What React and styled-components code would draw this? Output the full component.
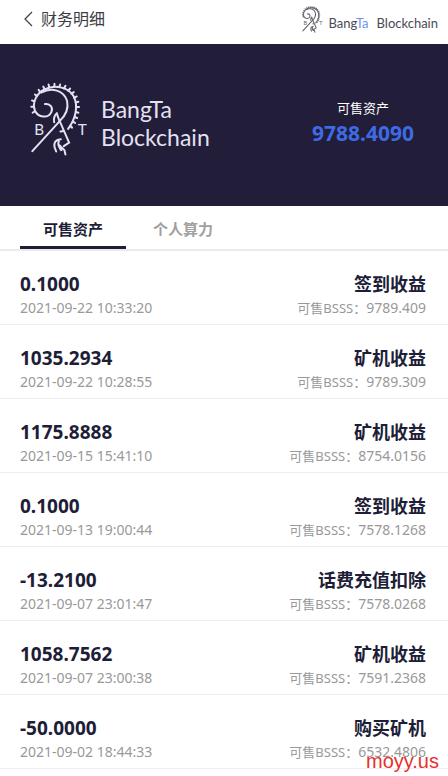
import React from 'react';
import styled, {createGlobalStyle} from "styled-components";

const GlobalStyle = createGlobalStyle`
  * {
    box-sizing: border-box;
  }
  body {
    margin: 0;
    background: #fff;
    color: #201d37;
    font-family: "Noto Sans", "Noto Sans CJK SC", sans-serif;
  }
  button {
    margin: 0;
    padding: 0;
    border: none;
    background: none;
    font-family: inherit;
    cursor: pointer;
  }
`

const Page = styled.div`
  position: relative;
  min-height: 100vh;
`

const TopBar = styled.header`
  display: flex;
  align-items: center;
  justify-content: space-between;
  height: 44px;
  padding: 0 10px 6px 22px;
`

const BackButton = styled.button`
  display: flex;
  align-items: center;
  gap: 7px;
  font-size: 16px;
  line-height: 24px;
  color: #3c3c44;
`

const Brand = styled.div`
  display: flex;
  align-items: center;
  gap: ${props => props.$large ? '13px' : '5px'};
`

const BrandName = styled.div`
  display: flex;
  flex-direction: ${props => props.$large ? 'column' : 'row'};
  gap: ${props => props.$large ? '0' : '8px'};
  padding-top: 8px;
  font-family: Lato, sans-serif;
  font-size: ${props => props.$large ? '23px' : '13px'};
  line-height: ${props => props.$large ? '28px' : '18px'};
  color: ${props => props.$large ? '#e4e1f2' : '#4a4958'};
`

const Accent = styled.span`
  color: #6b93ea;
`

const Banner = styled.section`
  display: flex;
  align-items: center;
  justify-content: space-between;
  height: 162px;
  padding: 0 34px 12px 30px;
  background: #221d38;
`

const Balance = styled.div`
  display: flex;
  flex-direction: column;
  align-items: center;
  padding-top: 6px;
`

const BalanceLabel = styled.span`
  font-size: 13px;
  line-height: 22px;
  color: #fff;
`

const BalanceValue = styled.strong`
  font-size: 21px;
  line-height: 28px;
  color: #3e6ae6;
`

const Tabs = styled.nav`
  display: flex;
  gap: 4px;
  height: 45px;
  padding: 0 20px;
  border-bottom: 2px solid #ebebeb;
`

const Tab = styled.button`
  && {
    padding: 4px 23px 0;
    border-bottom: 3px solid ${props => props.$active ? '#201d37' : 'transparent'};
  }
  font-size: 15px;
  font-weight: 700;
  color: ${props => props.$active ? '#201d37' : '#a0a0a0'};
`

const List = styled.ul`
  margin: 0;
  padding: 0;
  list-style: none;
`

const Row = styled.li`
  display: flex;
  justify-content: space-between;
  padding: 20px 22px 5px 20px;
  border-bottom: 1px solid #ededed;
`

const Column = styled.div`
  display: flex;
  flex-direction: column;
  align-items: ${props => props.$right ? 'flex-end' : 'flex-start'};
`

const Title = styled.span`
  font-size: ${props => props.$cjk ? '18px' : '19px'};
  font-weight: 700;
  line-height: 26px;
`

const Detail = styled.span`
  font-size: 14px;
  line-height: 22px;
  color: #999;
`

const DetailLabel = styled.span`
  font-size: 13px;
`

const Watermark = styled.div`
  position: absolute;
  right: 9px;
  bottom: 4px;
  font-family: "Liberation Sans", sans-serif;
  font-size: 20px;
  line-height: 22px;
  color: #e8302c;
`

const records = [
    {amount: '0.1000', time: '2021-09-22 10:33:20', title: '签到收益', rest: '9789.409'},
    {amount: '1035.2934', time: '2021-09-22 10:28:55', title: '矿机收益', rest: '9789.309'},
    {amount: '1175.8888', time: '2021-09-15 15:41:10', title: '矿机收益', rest: '8754.0156'},
    {amount: '0.1000', time: '2021-09-13 19:00:44', title: '签到收益', rest: '7578.1268'},
    {amount: '-13.2100', time: '2021-09-07 23:01:47', title: '话费充值扣除', rest: '7578.0268'},
    {amount: '1058.7562', time: '2021-09-07 23:00:38', title: '矿机收益', rest: '7591.2368'},
    {amount: '-50.0000', time: '2021-09-02 18:44:33', title: '购买矿机', rest: '6532.4806'},
]

// ram's head with a toothed horn
const Emblem = ({width, height, color, stroke}) => (
    <svg width={width} height={height} viewBox="45 35 175 225" fill="none" stroke={color} strokeWidth={stroke} strokeLinecap="round">
        <path d="M90 101 C106 98 116 112 109 126 C100 145 70 142 60 121 C50 96 66 68 88 57 C118 42 160 48 177 78 C192 108 182 146 160 176"/>
        <path d="M80 66 C110 48 148 60 157 92 C162 116 152 136 134 153 L52 243"/>
        <path d="M59 123 L53 127 M56 109 L49 109 M58 93 L51 90 M66 77 L60 72 M76 65 L71 58 M89 56 L85 48 M103 51 L101 42 M118 49 L119 40 M133 50 L136 42 M147 54 L152 46 M160 61 L166 54 M170 70 L177 65 M178 82 L186 78 M183 96 L191 94 M185 110 L193 110 M184 125 L191 127 M180 140 L187 143 M174 154 L181 158 M166 167 L172 172"/>
        <path d="M118 156 C116 145 119 135 126 129 C131 143 132 151 138 160 L163 217 L147 228 M137 184 L143 183"/>
        <path d="M138 207 C122 208 116 218 119 231 L124 244 M132 214 C126 225 135 233 140 242 L138 229 L149 240 L152 253"/>
        <g fill={color} stroke="none" fontFamily="Lato, sans-serif" fontSize="46" fontWeight="400">
            <text x="58" y="193">B</text>
            <text x="189" y="193">T</text>
        </g>
    </svg>
)

const App = () => {
    const [active, setActive] = React.useState(0)

    return (
        <Page>
            <GlobalStyle/>
            <TopBar>
                <BackButton type="button">
                    <svg width="12" height="16" viewBox="0 0 12 16" fill="none" stroke="#3c3c44" strokeWidth="1.2">
                        <path d="M10 1 L3 8 L10 15"/>
                    </svg>
                    财务明细
                </BackButton>
                <Brand>
                    <Emblem width={21} height={27} color="#66656f" stroke={9}/>
                    <BrandName>
                        <span>Bang<Accent>Ta</Accent></span>
                        <span>Blockchain</span>
                    </BrandName>
                </Brand>
            </TopBar>
            <Banner>
                <Brand $large>
                    <Emblem width={58} height={75} color="#e4e1f2" stroke={6}/>
                    <BrandName $large>
                        <span>BangTa</span>
                        <span>Blockchain</span>
                    </BrandName>
                </Brand>
                <Balance>
                    <BalanceLabel>可售资产</BalanceLabel>
                    <BalanceValue>9788.4090</BalanceValue>
                </Balance>
            </Banner>
            <Tabs>
                {['可售资产', '个人算力'].map((name, i) => (
                    <Tab key={name} type="button" $active={i === active} onClick={() => setActive(i)}>{name}</Tab>
                ))}
            </Tabs>
            <List>
                {records.map((item) => (
                    <Row key={item.time}>
                        <Column>
                            <Title>{item.amount}</Title>
                            <Detail>{item.time}</Detail>
                        </Column>
                        <Column $right>
                            <Title $cjk>{item.title}</Title>
                            <Detail><DetailLabel>可售BSSS：</DetailLabel>{item.rest}</Detail>
                        </Column>
                    </Row>
                ))}
            </List>
            <Watermark>moyy.us</Watermark>
        </Page>
    )
}

export default App;
